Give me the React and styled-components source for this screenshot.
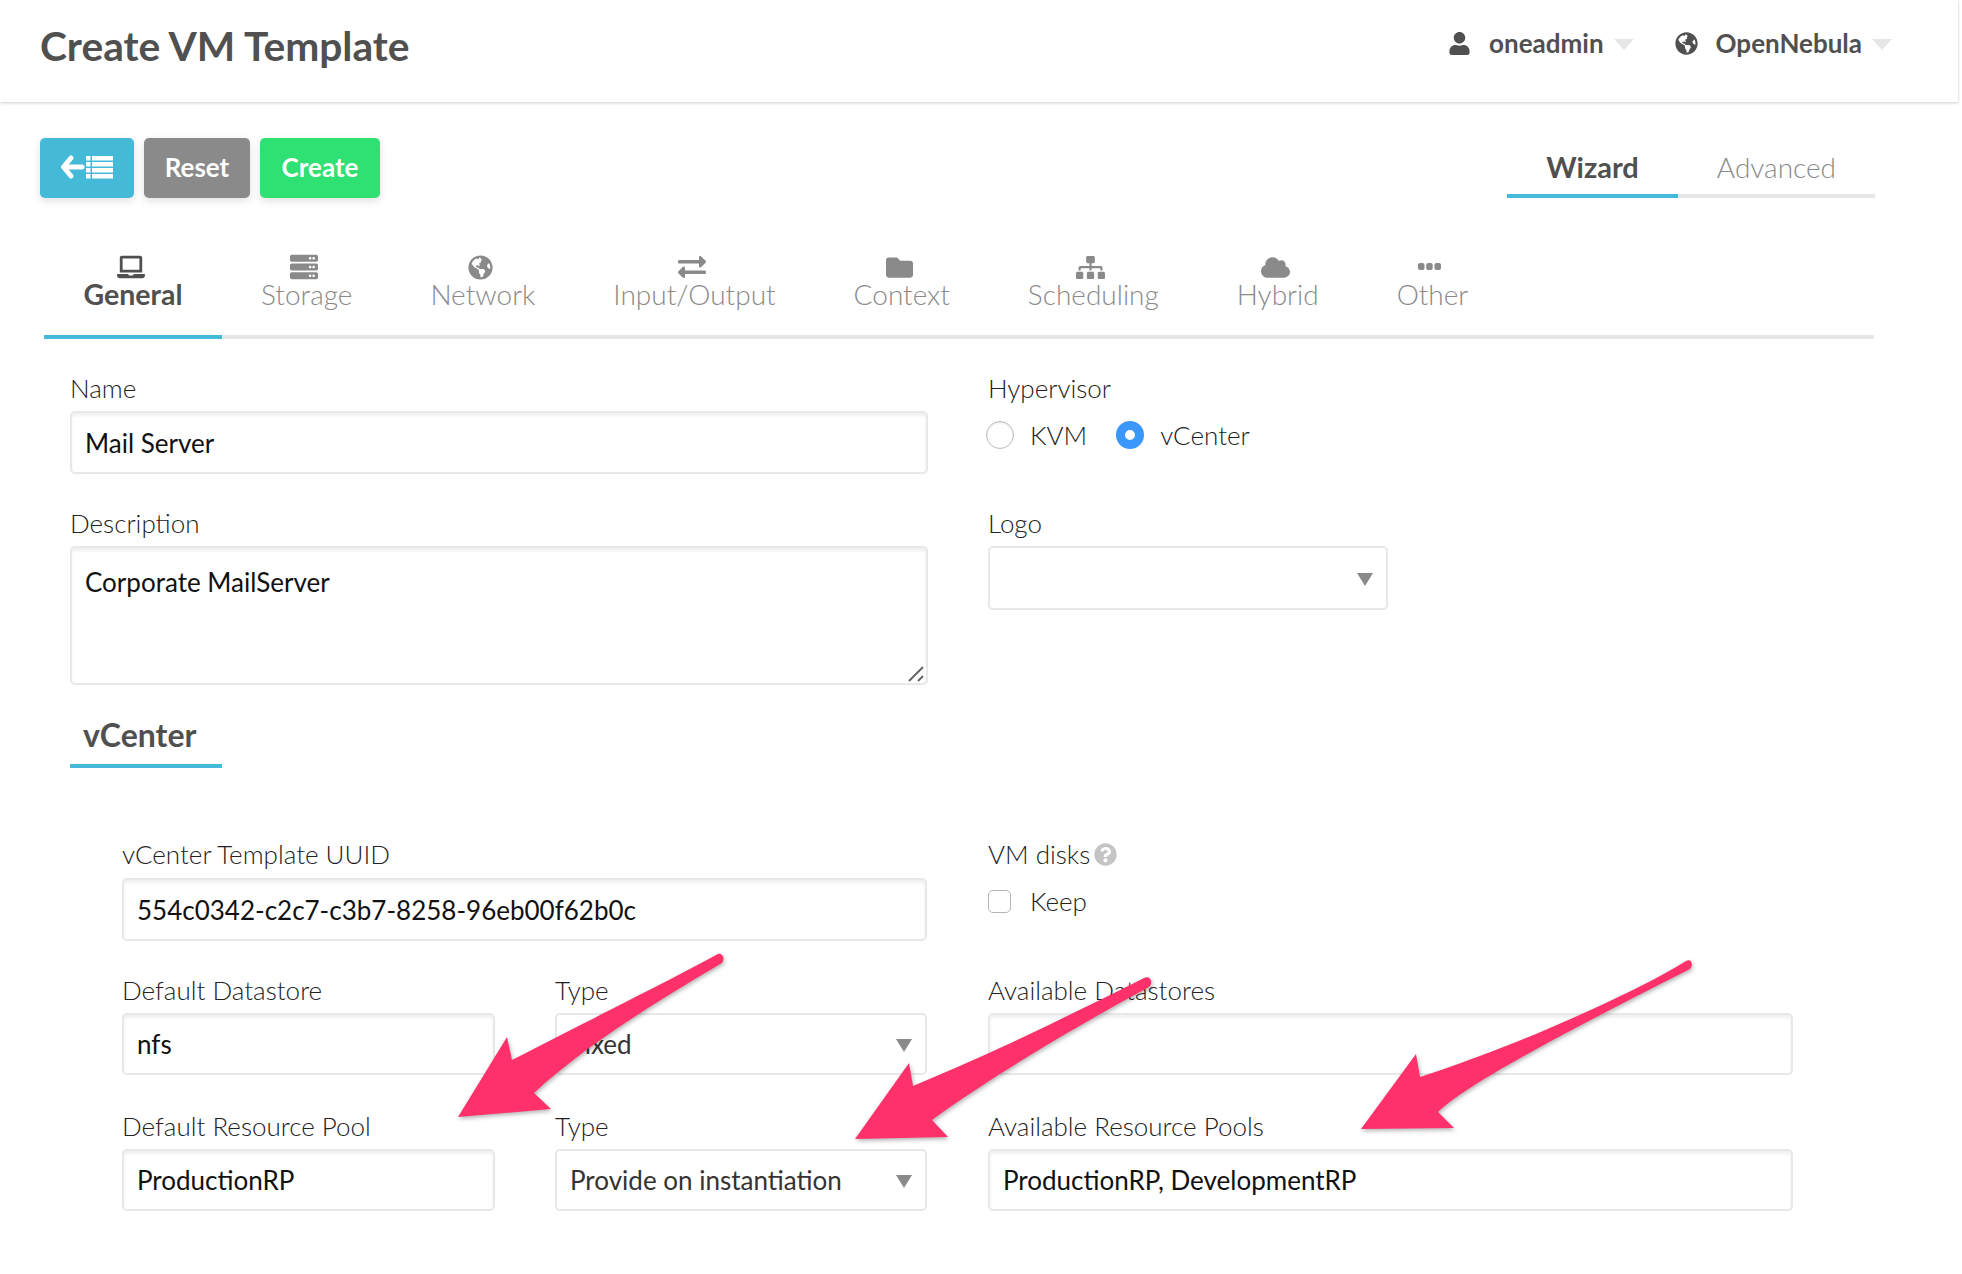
import React from "react";
import styled, { createGlobalStyle } from "styled-components";
import {
  FaLaptop,
  FaServer,
  FaGlobeAmericas,
  FaExchangeAlt,
  FaFolder,
  FaSitemap,
  FaCloud,
  FaUser,
  FaQuestionCircle,
} from "react-icons/fa";

const Dots = () => (
  <svg width="23" height="28" viewBox="0 0 23 28" fill="currentColor">
    <rect x="0" y="10" width="6.5" height="7" rx="2" />
    <rect x="8.2" y="10" width="6.5" height="7" rx="2" />
    <rect x="16.5" y="10" width="6.5" height="7" rx="2" />
  </svg>
);

const BackToList = () => (
  <svg width="52" height="24" viewBox="0 0 52 24">
    <path d="M10 3 L2.5 12 L10 21 M3 12 H21" stroke="#fff" strokeWidth="5" strokeLinecap="round" strokeLinejoin="round" fill="none" />
    <g fill="#fff">
      <rect x="25" y="1" width="4.5" height="4.5" />
      <rect x="31" y="1" width="21" height="4.5" />
      <rect x="25" y="7" width="4.5" height="4.5" />
      <rect x="31" y="7" width="21" height="4.5" />
      <rect x="25" y="13" width="4.5" height="4.5" />
      <rect x="31" y="13" width="21" height="4.5" />
      <rect x="25" y="19" width="4.5" height="4.5" />
      <rect x="31" y="19" width="21" height="4.5" />
    </g>
  </svg>
);

const tabs = [
  { label: "General", icon: <FaLaptop size={28} />, active: true },
  { label: "Storage", icon: <FaServer size={28} /> },
  { label: "Network", icon: <FaGlobeAmericas size={25} /> },
  { label: "Input/Output", icon: <FaExchangeAlt size={28} /> },
  { label: "Context", icon: <FaFolder size={27} /> },
  { label: "Scheduling", icon: <FaSitemap size={29} /> },
  { label: "Hybrid", icon: <FaCloud size={29} /> },
  { label: "Other", icon: <Dots /> },
];

const App = () => (
  <Page>
    <GlobalStyle />
    <Header>
      <Title>Create VM Template</Title>
      <UserMenu>
        <MenuItem>
          <FaUser size={23} />
          <MenuText>oneadmin</MenuText>
          <MenuCaret />
        </MenuItem>
        <MenuItem>
          <FaGlobeAmericas size={23} />
          <MenuText>OpenNebula</MenuText>
          <MenuCaret />
        </MenuItem>
      </UserMenu>
    </Header>

    <Toolbar>
      <Buttons>
        <Button $bg="#45b9d8" $width={94}>
          <BackToList />
        </Button>
        <Button $bg="#8a8a8a" $width={106}>Reset</Button>
        <Button $bg="#2fe072" $width={120}>Create</Button>
      </Buttons>
      <ModeTabs>
        <ModeTab $active>Wizard</ModeTab>
        <ModeTab>Advanced</ModeTab>
      </ModeTabs>
    </Toolbar>

    <TabBar>
      {tabs.map(({ label, icon, active }) => (
        <Tab key={label} $active={active}>
          <TabIcon $active={active}>{icon}</TabIcon>
          <TabLabel $active={active}>{label}</TabLabel>
        </Tab>
      ))}
    </TabBar>

    <Form>
      <Row $gap={34}>
        <Field>
          <Label>Name</Label>
          <NameInput>Mail Server</NameInput>
        </Field>
        <Field>
          <Label>Hypervisor</Label>
          <Options>
            <Option>
              <Radio />
              KVM
            </Option>
            <Option>
              <Radio $checked />
              vCenter
            </Option>
          </Options>
        </Field>
      </Row>
      <Row>
        <Field>
          <Label>Description</Label>
          <TextArea>
            Corporate MailServer
            <ResizeHandle viewBox="0 0 16 16">
              <path d="M1 15 L15 1 M10 15 L15 10" stroke="#666" strokeWidth="2" fill="none" />
            </ResizeHandle>
          </TextArea>
        </Field>
        <Field>
          <Label>Logo</Label>
          <LogoSelect />
        </Field>
      </Row>

      <SectionTitle>vCenter</SectionTitle>

      <Inner>
        <Row>
          <Field>
            <Label>vCenter Template UUID</Label>
            <UuidInput>554c0342-c2c7-c3b7-8258-96eb00f62b0c</UuidInput>
          </Field>
          <Field>
            <Label>
              VM disks
              <HelpIcon><FaQuestionCircle size={23} /></HelpIcon>
            </Label>
            <Options>
              <Option>
                <Checkbox />
                Keep
              </Option>
            </Options>
          </Field>
        </Row>
        <Row>
          <HalfFields>
            <Field>
              <Label>Default Datastore</Label>
              <Input>nfs</Input>
            </Field>
            <Field>
              <Label>Type</Label>
              <Select>Fixed</Select>
            </Field>
          </HalfFields>
          <Field>
            <Label>Available Datastores</Label>
            <Input />
          </Field>
        </Row>
        <Row>
          <HalfFields>
            <Field>
              <Label>Default Resource Pool</Label>
              <Input>ProductionRP</Input>
            </Field>
            <Field>
              <Label>Type</Label>
              <Select>Provide on instantiation</Select>
            </Field>
          </HalfFields>
          <Field>
            <Label>Available Resource Pools</Label>
            <Input>ProductionRP, DevelopmentRP</Input>
          </Field>
        </Row>
      </Inner>
    </Form>

    <Arrows viewBox="0 0 1962 1274">
      <path d="M716 955 C680 975 590 1020 512 1060 L507 1037 L458 1117 L551 1109 L534 1093 C580 1050 650 1005 722 963 C726 957 721 951 716 955 Z" />
      <path d="M1144 978 C1070 1015 1000 1050 913 1086 L909 1063 L855 1139 L948 1137 L932 1120 C980 1085 1060 1035 1149 987 C1154 982 1150 975 1144 978 Z" />
      <path d="M1686 961 C1640 990 1520 1045 1420 1077 L1416 1054 L1361 1129 L1454 1128 L1438 1112 C1465 1085 1560 1035 1690 969 C1694 964 1691 958 1686 961 Z" />
    </Arrows>
  </Page>
);

export default App;

const GlobalStyle = createGlobalStyle`
  html, body {
    margin: 0;
    padding: 0;
    background: #fff;
  }
  body {
    font-family: "Lato", "Liberation Sans", sans-serif;
  }
`;

const Page = styled.div`
  position: relative;
  width: 1962px;
  height: 1274px;
  overflow: hidden;
  background: #fff;
  color: #222;
`;

const Header = styled.header`
  display: flex;
  justify-content: space-between;
  align-items: center;
  box-sizing: border-box;
  width: 1958px;
  height: 102px;
  padding: 0 66px 0 40px;
  background: #fff;
  box-shadow: 0 1px 3px rgba(0, 0, 0, 0.2);
`;

const Title = styled.h1`
  margin: 0 0 12px;
  font-size: 40.7px;
  font-weight: 700;
  color: #505050;
`;

const UserMenu = styled.div`
  display: flex;
  gap: 41px;
  margin-bottom: 16px;
  color: #505050;
`;

const MenuItem = styled.div`
  display: flex;
  align-items: center;
`;

const MenuText = styled.span`
  margin-left: 18px;
  font-size: 26px;
  font-weight: 700;
`;

const MenuCaret = styled.span`
  margin: 2px 0 0 10px;
  border-left: 10px solid transparent;
  border-right: 10px solid transparent;
  border-top: 11px solid #e6e6e6;
`;

const Toolbar = styled.div`
  display: flex;
  justify-content: space-between;
  align-items: flex-end;
  margin-top: 36px;
  padding: 0 87px 0 40px;
`;

const Buttons = styled.div`
  display: flex;
  gap: 10px;
`;

const Button = styled.button`
  display: flex;
  align-items: center;
  justify-content: center;
  width: ${(p) => p.$width}px;
  height: 60px;
  padding: 0 0 2px;
  border: 0;
  border-radius: 5px;
  background: ${(p) => p.$bg};
  color: #fff;
  font-family: inherit;
  font-size: 26px;
  font-weight: 700;
  box-shadow: 0 3px 8px rgba(0, 0, 0, 0.12);
`;

const ModeTabs = styled.div`
  display: flex;
`;

const ModeTab = styled.div`
  padding: 1px 39px 7px;
  border-bottom: 4px solid ${(p) => (p.$active ? "#45b9d8" : "#e6e6e6")};
  font-size: ${(p) => (p.$active ? 29 : 28)}px;
  line-height: 40px;
  font-weight: ${(p) => (p.$active ? 700 : 300)};
  color: ${(p) => (p.$active ? "#505050" : "#8a8a8a")};
`;

const TabBar = styled.div`
  display: flex;
  width: 1830px;
  margin: 52px 0 0 44px;
  border-bottom: 4px solid #e6e6e6;
`;

const Tab = styled.div`
  display: flex;
  flex-direction: column;
  align-items: center;
  padding: 4px ${(p) => (p.$active ? 39.5 : 39)}px 22px;
  margin-bottom: -4px;
  border-bottom: 4px solid ${(p) => (p.$active ? "#45b9d8" : "transparent")};
`;

const TabIcon = styled.span`
  display: flex;
  align-items: center;
  height: 26px;
  margin-right: 5px;
  color: ${(p) => (p.$active ? "#505050" : "#8a8a8a")};
`;

const TabLabel = styled.span`
  margin-top: -5px;
  font-size: ${(p) => (p.$active ? 28.5 : 28)}px;
  line-height: 38px;
  font-weight: ${(p) => (p.$active ? 700 : 300)};
  color: ${(p) => (p.$active ? "#505050" : "#8a8a8a")};
`;

const Form = styled.div`
  display: flex;
  flex-direction: column;
  padding: 34px 0 0 70px;
`;

const Row = styled.div`
  display: grid;
  grid-template-columns: 858px 804px;
  column-gap: 60px;
  margin-bottom: ${(p) => p.$gap || 0}px;
`;

const Field = styled.div`
  display: flex;
  flex-direction: column;
  min-width: 0;
`;

const HalfFields = styled.div`
  display: grid;
  grid-template-columns: 373px 372px;
  column-gap: 60px;
`;

const Label = styled.label`
  display: flex;
  align-items: center;
  height: 38px;
  padding-bottom: 8px;
  box-sizing: border-box;
  font-size: 26px;
  font-weight: 300;
  color: #222;
`;

const Input = styled.div`
  display: flex;
  align-items: center;
  box-sizing: border-box;
  height: 62px;
  padding: 0 13px;
  border: 2px solid #e8e8e8;
  border-radius: 5px;
  background: #fff;
  box-shadow: inset 0 3px 3px rgba(0, 0, 0, 0.06);
  font-size: 26px;
  color: #111;
`;

const NameInput = styled(Input)`
  height: 63px;
`;

const UuidInput = styled(Input)`
  height: 63px;
  margin: 1px 0 -2px;
`;

const TextArea = styled(Input)`
  position: relative;
  align-items: flex-start;
  height: 139px;
  padding-top: 18px;
`;

const ResizeHandle = styled.svg`
  position: absolute;
  right: 2px;
  bottom: 1px;
  width: 16px;
  height: 16px;
`;

const Select = styled(Input)`
  justify-content: space-between;
  box-shadow: none;
  color: #333;

  &::after {
    content: "";
    margin-top: 2px;
    border-left: 8px solid transparent;
    border-right: 8px solid transparent;
    border-top: 13px solid #8a8a8a;
  }
`;

const LogoSelect = styled(Select)`
  width: 400px;
  height: 64px;
  justify-content: flex-end;
`;

const Options = styled.div`
  display: flex;
  gap: 31px;
  margin-top: 2px;
`;

const Option = styled.div`
  display: flex;
  align-items: center;
  height: 40px;
  gap: 13px;
  font-size: 26px;
  font-weight: 300;
  margin-top: 2px;
`;

const Radio = styled.span`
  box-sizing: border-box;
  width: 28px;
  height: 28px;
  margin-left: -2px;
  margin-right: 3px;
  border-radius: 50%;
  ${(p) =>
    p.$checked
      ? "background: #fff; border: 9px solid #3a97fb;"
      : "background: #fff; border: 1px solid #bbb; box-shadow: inset 0 1px 2px rgba(0,0,0,0.1);"}
`;

const Checkbox = styled.span`
  box-sizing: border-box;
  width: 23px;
  height: 23px;
  margin-right: 6px;
  border: 1px solid #b5b5b5;
  border-radius: 5px;
`;

const HelpIcon = styled.span`
  display: flex;
  margin-left: 4px;
  color: #c4c4c4;
`;

const SectionTitle = styled.h2`
  box-sizing: border-box;
  width: 152px;
  height: 53px;
  margin: 30px 0 0;
  padding: 0 0 0 13px;
  border-bottom: 4px solid #45b9d8;
  font-size: 32px;
  line-height: 40px;
  font-weight: 700;
  color: #505050;
`;

const Inner = styled.div`
  display: flex;
  flex-direction: column;
  gap: 36px;
  margin-top: 71px;

  & > ${Row} {
    grid-template-columns: 805px 805px;
    margin-left: 52px;
    column-gap: 61px;
  }
`;

const Arrows = styled.svg`
  position: absolute;
  left: 0;
  top: 0;
  width: 1962px;
  height: 1274px;
  pointer-events: none;
  fill: #ff316b;
  filter: drop-shadow(1px 2px 2px rgba(0, 0, 0, 0.3));
`;
